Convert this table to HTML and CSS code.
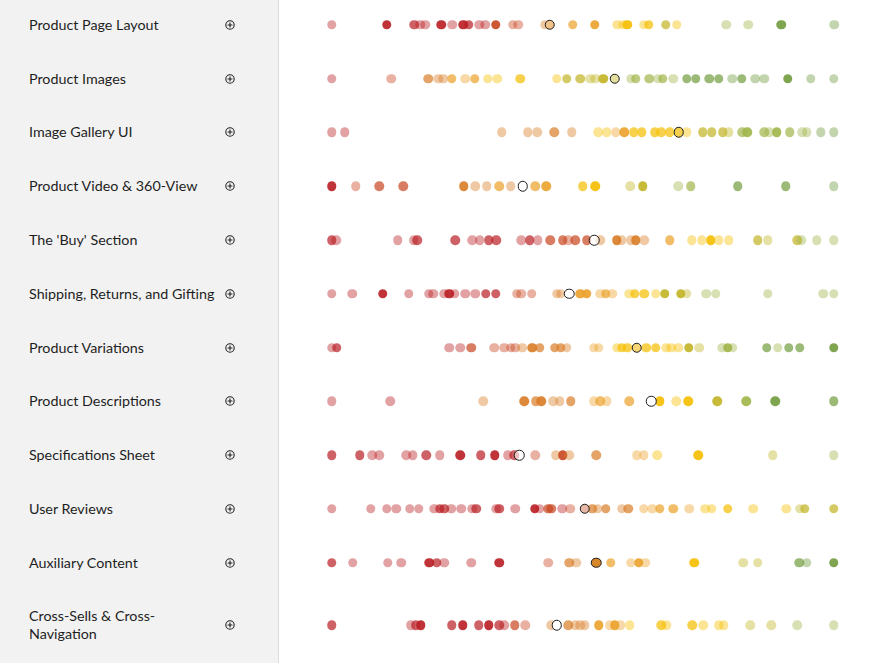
FILE: index.html
```html
<!DOCTYPE html>
<html lang="en">
<head>
<meta charset="utf-8">
<title>Product Page Benchmark</title>
<link rel="stylesheet" href="styles.css">
</head>
<body>
<div class="page">
  <div class="rows">

    <div class="row">
      <div class="label"><span class="name">Product Page Layout</span><svg class="plus" viewBox="0 0 10 10"><circle cx="5" cy="5" r="4.2"/><path d="M5 2.6v4.8M2.6 5h4.8"/></svg></div>
      <div class="track">
        <i class="r l" style="left:52.9px"></i><i class="r d" style="left:107.8px"></i><i class="r m" style="left:135.2px"></i><i class="r l" style="left:141px"></i><i class="r l" style="left:146.1px"></i><i class="r d" style="left:162.4px"></i><i class="r l" style="left:173.2px"></i><i class="r d" style="left:184.1px"></i><i class="r m" style="left:189.5px"></i><i class="r l" style="left:200.3px"></i><i class="r l" style="left:206.1px"></i><i class="ro d" style="left:216.9px"></i><i class="ro l" style="left:233.5px"></i><i class="ro l" style="left:239.3px"></i><i class="o l" style="left:265.7px"></i><i class="ao m" style="left:293.5px"></i><i class="ao d" style="left:315.6px"></i><i class="y l" style="left:338.3px"></i><i class="y l" style="left:343.7px"></i><i class="y d" style="left:348.1px"></i><i class="y l" style="left:364.7px"></i><i class="y m" style="left:369.8px"></i><i class="yg m" style="left:386.8px"></i><i class="y l" style="left:397.6px"></i><i class="lg l" style="left:447.1px"></i><i class="lg l" style="left:469.1px"></i><i class="g d" style="left:502px"></i><i class="g l" style="left:555px"></i>
        <b class="hl peach" style="left:270.5px"></b>
      </div>
    </div>

    <div class="row">
      <div class="label"><span class="name">Product Images</span><svg class="plus" viewBox="0 0 10 10"><circle cx="5" cy="5" r="4.2"/><path d="M5 2.6v4.8M2.6 5h4.8"/></svg></div>
      <div class="track">
        <i class="r l" style="left:52.8px"></i><i class="ro l" style="left:112.3px"></i><i class="o m" style="left:149.1px"></i><i class="o l" style="left:159.2px"></i><i class="o l" style="left:164.3px"></i><i class="ao m" style="left:172.8px"></i><i class="ao l" style="left:186.3px"></i><i class="ao m" style="left:195.7px"></i><i class="y l" style="left:208.9px"></i><i class="y l" style="left:218.4px"></i><i class="y m" style="left:241px"></i><i class="y l" style="left:277.5px"></i><i class="yg m" style="left:287.6px"></i><i class="yg m" style="left:301.1px"></i><i class="yg l" style="left:311.3px"></i><i class="yg l" style="left:316.3px"></i><i class="yg d" style="left:324.1px"></i><i class="lg l" style="left:351.8px"></i><i class="lg m" style="left:356.9px"></i><i class="lg m" style="left:370.4px"></i><i class="lg l" style="left:378.8px"></i><i class="lg m" style="left:383.9px"></i><i class="lg l" style="left:394px"></i><i class="g m" style="left:407.6px"></i><i class="g m" style="left:416.7px"></i><i class="g m" style="left:430.2px"></i><i class="g m" style="left:439.6px"></i><i class="g l" style="left:453.2px"></i><i class="g m" style="left:462.6px"></i><i class="g l" style="left:476.1px"></i><i class="g l" style="left:485.3px"></i><i class="g d" style="left:508.9px"></i><i class="g l" style="left:531.9px"></i><i class="g l" style="left:554.9px"></i>
        <b class="hl lime" style="left:335.9px"></b>
      </div>
    </div>

    <div class="row">
      <div class="label"><span class="name">Image Gallery UI</span><svg class="plus" viewBox="0 0 10 10"><circle cx="5" cy="5" r="4.2"/><path d="M5 2.6v4.8M2.6 5h4.8"/></svg></div>
      <div class="track">
        <i class="r l" style="left:52.8px"></i><i class="r l" style="left:65.7px"></i><i class="o l" style="left:222.8px"></i><i class="o l" style="left:248.8px"></i><i class="o l" style="left:258.2px"></i><i class="o m" style="left:275.1px"></i><i class="o l" style="left:292.7px"></i><i class="y l" style="left:319px"></i><i class="y l" style="left:327.5px"></i><i class="ao l" style="left:336.6px"></i><i class="ao d" style="left:345.1px"></i><i class="y m" style="left:354.5px"></i><i class="y m" style="left:362.6px"></i><i class="y m" style="left:375.5px"></i><i class="y m" style="left:382.2px"></i><i class="y m" style="left:390.7px"></i><i class="y l" style="left:407.6px"></i><i class="yg m" style="left:423.8px"></i><i class="yg m" style="left:432.9px"></i><i class="yg m" style="left:443.7px"></i><i class="yg l" style="left:449.8px"></i><i class="lg m" style="left:463.3px"></i><i class="lg d" style="left:468.4px"></i><i class="lg m" style="left:485.3px"></i><i class="lg l" style="left:490.3px"></i><i class="lg d" style="left:497.8px"></i><i class="lg m" style="left:510.6px"></i><i class="lg l" style="left:523.4px"></i><i class="lg l" style="left:527.5px"></i><i class="g l" style="left:541.7px"></i><i class="g l" style="left:554.9px"></i>
        <b class="hl yel" style="left:399.8px"></b>
      </div>
    </div>

    <div class="row">
      <div class="label"><span class="name">Product Video &amp; 360-View</span><svg class="plus" viewBox="0 0 10 10"><circle cx="5" cy="5" r="4.2"/><path d="M5 2.6v4.8M2.6 5h4.8"/></svg></div>
      <div class="track">
        <i class="r d" style="left:52.8px"></i><i class="ro l" style="left:76.5px"></i><i class="ro m" style="left:100.1px"></i><i class="ro m" style="left:124.4px"></i><i class="o d" style="left:184.6px"></i><i class="o l" style="left:196.4px"></i><i class="o l" style="left:207.6px"></i><i class="ao m" style="left:220px"></i><i class="o l" style="left:231.9px"></i><i class="ao m" style="left:256.2px"></i><i class="ao d" style="left:267.4px"></i><i class="y m" style="left:303.8px"></i><i class="y d" style="left:316.3px"></i><i class="yg l" style="left:351.1px"></i><i class="yg d" style="left:363.6px"></i><i class="lg l" style="left:399.1px"></i><i class="lg m" style="left:411.6px"></i><i class="g m" style="left:458.9px"></i><i class="g m" style="left:506.5px"></i><i class="g l" style="left:554.9px"></i>
        <b class="hl" style="left:243.7px"></b>
      </div>
    </div>

    <div class="row">
      <div class="label"><span class="name">The 'Buy' Section</span><svg class="plus" viewBox="0 0 10 10"><circle cx="5" cy="5" r="4.2"/><path d="M5 2.6v4.8M2.6 5h4.8"/></svg></div>
      <div class="track">
        <i class="r m" style="left:52.8px"></i><i class="r l" style="left:57px"></i><i class="r l" style="left:118.7px"></i><i class="r l" style="left:134.9px"></i><i class="r m" style="left:138.3px"></i><i class="r m" style="left:176.1px"></i><i class="r l" style="left:193px"></i><i class="r l" style="left:200.5px"></i><i class="r m" style="left:209.9px"></i><i class="r m" style="left:217.4px"></i><i class="r l" style="left:242px"></i><i class="r m" style="left:250.5px"></i><i class="r l" style="left:258.9px"></i><i class="ro m" style="left:271.4px"></i><i class="ro m" style="left:283.6px"></i><i class="ro l" style="left:289.3px"></i><i class="ro m" style="left:296px"></i><i class="ro m" style="left:307.9px"></i><i class="o l" style="left:321.4px"></i><i class="o d" style="left:337.6px"></i><i class="o l" style="left:342.7px"></i><i class="o l" style="left:351.8px"></i><i class="o d" style="left:356.9px"></i><i class="o l" style="left:365.3px"></i><i class="ao m" style="left:390.7px"></i><i class="y l" style="left:412.6px"></i><i class="y l" style="left:422.8px"></i><i class="y d" style="left:431.9px"></i><i class="y l" style="left:439.6px"></i><i class="y l" style="left:449.8px"></i><i class="yg m" style="left:478.5px"></i><i class="yg l" style="left:488.6px"></i><i class="yg m" style="left:518px"></i><i class="lg l" style="left:522px"></i><i class="lg l" style="left:537.6px"></i><i class="lg l" style="left:554.9px"></i>
        <b class="hl clear" style="left:315.3px"></b>
      </div>
    </div>

    <div class="row">
      <div class="label"><span class="name">Shipping, Returns, and Gifting</span><svg class="plus" viewBox="0 0 10 10"><circle cx="5" cy="5" r="4.2"/><path d="M5 2.6v4.8M2.6 5h4.8"/></svg></div>
      <div class="track">
        <i class="r l" style="left:52.8px"></i><i class="r l" style="left:73.1px"></i><i class="r d" style="left:103.5px"></i><i class="r l" style="left:129.5px"></i><i class="r l" style="left:149.8px"></i><i class="r l" style="left:154.2px"></i><i class="r l" style="left:165.3px"></i><i class="r d" style="left:170.4px"></i><i class="r l" style="left:175.5px"></i><i class="r l" style="left:186.3px"></i><i class="r l" style="left:196.4px"></i><i class="r m" style="left:206.5px"></i><i class="r m" style="left:216.7px"></i><i class="ro l" style="left:237.6px"></i><i class="ro l" style="left:242px"></i><i class="ro l" style="left:252.8px"></i><i class="o l" style="left:277.5px"></i><i class="o l" style="left:281.5px"></i><i class="ao d" style="left:301.1px"></i><i class="ao d" style="left:307.9px"></i><i class="ao l" style="left:321.4px"></i><i class="ao m" style="left:326.5px"></i><i class="ao l" style="left:333.2px"></i><i class="y l" style="left:350.1px"></i><i class="y m" style="left:355.9px"></i><i class="y m" style="left:365.3px"></i><i class="y l" style="left:376.5px"></i><i class="yg d" style="left:385.6px"></i><i class="yg d" style="left:401.8px"></i><i class="yg l" style="left:407.6px"></i><i class="lg l" style="left:427.1px"></i><i class="lg l" style="left:436.9px"></i><i class="lg l" style="left:488.6px"></i><i class="lg l" style="left:544.4px"></i><i class="lg l" style="left:554.9px"></i>
        <b class="hl" style="left:290.3px"></b>
      </div>
    </div>

    <div class="row">
      <div class="label"><span class="name">Product Variations</span><svg class="plus" viewBox="0 0 10 10"><circle cx="5" cy="5" r="4.2"/><path d="M5 2.6v4.8M2.6 5h4.8"/></svg></div>
      <div class="track">
        <i class="r l" style="left:52.8px"></i><i class="r m" style="left:57.9px"></i><i class="r l" style="left:170.1px"></i><i class="r l" style="left:181.2px"></i><i class="ro m" style="left:192.4px"></i><i class="ro l" style="left:215px"></i><i class="ro l" style="left:225.1px"></i><i class="ro l" style="left:231.9px"></i><i class="ro l" style="left:236.3px"></i><i class="o l" style="left:243px"></i><i class="o d" style="left:253.2px"></i><i class="o m" style="left:260.6px"></i><i class="o m" style="left:275.8px"></i><i class="o m" style="left:281.5px"></i><i class="o l" style="left:287.6px"></i><i class="ao l" style="left:314.6px"></i><i class="ao l" style="left:319.7px"></i><i class="y l" style="left:337.6px"></i><i class="y m" style="left:342.7px"></i><i class="y m" style="left:348.4px"></i><i class="y m" style="left:367px"></i><i class="y m" style="left:376.5px"></i><i class="y l" style="left:387.3px"></i><i class="y l" style="left:392.4px"></i><i class="y l" style="left:399.1px"></i><i class="yg d" style="left:409.9px"></i><i class="yg l" style="left:420px"></i><i class="lg l" style="left:443px"></i><i class="lg d" style="left:448.8px"></i><i class="lg l" style="left:453.8px"></i><i class="g m" style="left:487.6px"></i><i class="lg l" style="left:498.7px"></i><i class="g m" style="left:509.9px"></i><i class="g m" style="left:520.7px"></i><i class="g d" style="left:554.9px"></i>
        <b class="hl pale" style="left:357.9px"></b>
      </div>
    </div>

    <div class="row">
      <div class="label"><span class="name">Product Descriptions</span><svg class="plus" viewBox="0 0 10 10"><circle cx="5" cy="5" r="4.2"/><path d="M5 2.6v4.8M2.6 5h4.8"/></svg></div>
      <div class="track">
        <i class="r l" style="left:52.8px"></i><i class="r l" style="left:111.3px"></i><i class="o l" style="left:204.2px"></i><i class="o d" style="left:245.4px"></i><i class="o m" style="left:256.5px"></i><i class="o d" style="left:262.3px"></i><i class="o l" style="left:274.1px"></i><i class="o l" style="left:280.9px"></i><i class="o m" style="left:291.7px"></i><i class="ao l" style="left:314.6px"></i><i class="ao m" style="left:321.4px"></i><i class="ao l" style="left:327.5px"></i><i class="ao m" style="left:350.1px"></i><i class="y d" style="left:380.5px"></i><i class="y l" style="left:397.4px"></i><i class="y d" style="left:409.2px"></i><i class="yg d" style="left:438px"></i><i class="lg d" style="left:467.4px"></i><i class="g d" style="left:496.4px"></i><i class="g m" style="left:554.9px"></i>
        <b class="hl" style="left:372.1px"></b>
      </div>
    </div>

    <div class="row">
      <div class="label"><span class="name">Specifications Sheet</span><svg class="plus" viewBox="0 0 10 10"><circle cx="5" cy="5" r="4.2"/><path d="M5 2.6v4.8M2.6 5h4.8"/></svg></div>
      <div class="track">
        <i class="r m" style="left:52.8px"></i><i class="r m" style="left:80.9px"></i><i class="r l" style="left:93.4px"></i><i class="r l" style="left:100.1px"></i><i class="r l" style="left:127.1px"></i><i class="r l" style="left:133.9px"></i><i class="r m" style="left:147.4px"></i><i class="r l" style="left:160.9px"></i><i class="r d" style="left:181.2px"></i><i class="r m" style="left:201.5px"></i><i class="r d" style="left:215.7px"></i><i class="r l" style="left:228.5px"></i><i class="r m" style="left:235.3px"></i><i class="ro l" style="left:256.2px"></i><i class="o l" style="left:276.5px"></i><i class="ro d" style="left:283.6px"></i><i class="o l" style="left:290.3px"></i><i class="o m" style="left:317.4px"></i><i class="ao l" style="left:357.6px"></i><i class="ao l" style="left:364.6px"></i><i class="y l" style="left:378.2px"></i><i class="y d" style="left:419.4px"></i><i class="yg l" style="left:493.7px"></i><i class="lg l" style="left:554.9px"></i>
        <b class="hl clear" style="left:240.3px"></b>
      </div>
    </div>

    <div class="row">
      <div class="label"><span class="name">User Reviews</span><svg class="plus" viewBox="0 0 10 10"><circle cx="5" cy="5" r="4.2"/><path d="M5 2.6v4.8M2.6 5h4.8"/></svg></div>
      <div class="track">
        <i class="r l" style="left:52.8px"></i><i class="r l" style="left:91.7px"></i><i class="r l" style="left:107.9px"></i><i class="r l" style="left:117px"></i><i class="r l" style="left:130.5px"></i><i class="r l" style="left:139.6px"></i><i class="r l" style="left:155.2px"></i><i class="r m" style="left:160.9px"></i><i class="r m" style="left:165px"></i><i class="r l" style="left:172.1px"></i><i class="r l" style="left:182.2px"></i><i class="r l" style="left:193px"></i><i class="r m" style="left:197.4px"></i><i class="r l" style="left:217.4px"></i><i class="r m" style="left:220px"></i><i class="r l" style="left:236.3px"></i><i class="r d" style="left:255.5px"></i><i class="r l" style="left:260.6px"></i><i class="ro m" style="left:269px"></i><i class="ro m" style="left:272.4px"></i><i class="r l" style="left:283.2px"></i><i class="ro l" style="left:291px"></i><i class="o m" style="left:313px"></i><i class="o l" style="left:318.7px"></i><i class="o m" style="left:326.5px"></i><i class="o l" style="left:342.7px"></i><i class="o m" style="left:349.1px"></i><i class="ao l" style="left:364.6px"></i><i class="ao l" style="left:373.1px"></i><i class="ao m" style="left:380.5px"></i><i class="ao m" style="left:394px"></i><i class="ao l" style="left:410.3px"></i><i class="y l" style="left:426.1px"></i><i class="y l" style="left:432.9px"></i><i class="y m" style="left:448.8px"></i><i class="y l" style="left:474.1px"></i><i class="y l" style="left:507.2px"></i><i class="yg l" style="left:520.7px"></i><i class="yg m" style="left:525.8px"></i><i class="yg m" style="left:554.9px"></i>
        <b class="hl pink" style="left:305.5px"></b>
      </div>
    </div>

    <div class="row">
      <div class="label"><span class="name">Auxiliary Content</span><svg class="plus" viewBox="0 0 10 10"><circle cx="5" cy="5" r="4.2"/><path d="M5 2.6v4.8M2.6 5h4.8"/></svg></div>
      <div class="track">
        <i class="r m" style="left:52.8px"></i><i class="r l" style="left:73.8px"></i><i class="r l" style="left:108.6px"></i><i class="r l" style="left:122.1px"></i><i class="r d" style="left:150.1px"></i><i class="r m" style="left:157.6px"></i><i class="r l" style="left:165px"></i><i class="r l" style="left:192.4px"></i><i class="r d" style="left:220px"></i><i class="ro l" style="left:269px"></i><i class="o m" style="left:290px"></i><i class="o l" style="left:297.1px"></i><i class="ao m" style="left:331.5px"></i><i class="ao l" style="left:351.8px"></i><i class="ao d" style="left:359.6px"></i><i class="ao l" style="left:366.3px"></i><i class="y d" style="left:415px"></i><i class="yg l" style="left:464px"></i><i class="yg l" style="left:478.5px"></i><i class="g m" style="left:520px"></i><i class="g l" style="left:527.5px"></i><i class="g d" style="left:554.9px"></i>
        <b class="hl orange" style="left:317.4px"></b>
      </div>
    </div>

    <div class="row">
      <div class="label"><span class="name">Cross-Sells &amp; Cross-Navigation</span><svg class="plus" viewBox="0 0 10 10"><circle cx="5" cy="5" r="4.2"/><path d="M5 2.6v4.8M2.6 5h4.8"/></svg></div>
      <div class="track">
        <i class="r m" style="left:52.8px"></i><i class="r l" style="left:131.5px"></i><i class="r m" style="left:136.6px"></i><i class="r d" style="left:141.7px"></i><i class="r m" style="left:172.8px"></i><i class="r d" style="left:183.9px"></i><i class="r m" style="left:199.8px"></i><i class="r d" style="left:209.9px"></i><i class="r m" style="left:220px"></i><i class="r l" style="left:225.1px"></i><i class="ro m" style="left:235.9px"></i><i class="ro l" style="left:246.4px"></i><i class="o l" style="left:272.4px"></i><i class="o m" style="left:289.3px"></i><i class="o l" style="left:296px"></i><i class="o l" style="left:301.1px"></i><i class="o l" style="left:305.5px"></i><i class="ao d" style="left:319.7px"></i><i class="ao l" style="left:330.5px"></i><i class="ao d" style="left:335.9px"></i><i class="ao l" style="left:341px"></i><i class="y l" style="left:350.8px"></i><i class="y m" style="left:382.2px"></i><i class="y l" style="left:387.3px"></i><i class="y m" style="left:413.3px"></i><i class="y l" style="left:424.4px"></i><i class="y l" style="left:439.6px"></i><i class="y l" style="left:444.7px"></i><i class="yg l" style="left:471.1px"></i><i class="yg l" style="left:492px"></i><i class="lg l" style="left:518px"></i><i class="lg l" style="left:554.9px"></i>
        <b class="hl" style="left:277.5px"></b>
      </div>
    </div>

  </div>
</div>
</body>
</html>
```

FILE: styles.css
```css
html, body {
  margin: 0;
  padding: 0;
}

body {
  font-family: Lato, "Liberation Sans", Arial, sans-serif;
  color: #1e1e1e;
  background: #fff;
}

.page {
  min-height: 100vh;
  overflow: hidden;
  background: linear-gradient(to right, #f2f2f2 0, #f2f2f2 278px, #dcdcdc 278px, #dcdcdc 279px, #fff 279px);
}

.rows {
  margin-top: -2px;
}

.row {
  display: grid;
  grid-template-columns: 279px 1fr;
}

.label {
  display: flex;
  align-items: center;
  justify-content: space-between;
  gap: 6px;
  padding: 17.9px 44px 17.9px 29px;
  font-size: 14.3px;
  line-height: 18px;
}

.name {
  max-width: 192px;
}

.plus {
  flex: none;
  width: 10px;
  height: 10px;
  fill: none;
  stroke: #222;
  stroke-width: 1.1;
}

.track {
  position: relative;
}

.track i,
.track b {
  position: absolute;
  top: 50%;
  width: 9.5px;
  height: 9.5px;
  border-radius: 50%;
  transform: translate(-50%, -50%);
}

/* hues */
.r  { background: #b91e24; }
.ro { background: #c8461f; }
.o  { background: #d97c27; }
.ao { background: #eba12a; }
.y  { background: #f5be00; }
.yg { background: #c2b424; }
.lg { background: #9fb548; }
.g  { background: #719b3d; }

/* strengths */
.l { opacity: 0.42; }
.m { opacity: 0.7; }
.d { opacity: 0.9; }

/* highlighted (own) result */
.track .hl {
  z-index: 1;
  width: 10.5px;
  height: 10.5px;
  box-sizing: border-box;
  border: 1.5px solid #1b1b1b;
  background: #fff;
}

.track .hl.clear  { background: rgba(255, 255, 255, 0.6); }
.track .hl.peach  { background: #f1c389; }
.track .hl.lime   { background: #e4df9c; }
.track .hl.yel    { background: #f3cf4c; }
.track .hl.pale   { background: #f6d676; }
.track .hl.pink   { background: #e7b8a6; }
.track .hl.orange { background: #d8862a; }
```
